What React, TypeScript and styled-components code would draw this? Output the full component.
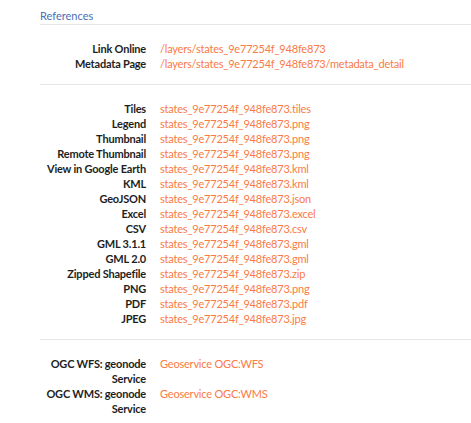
import React from 'react';
import styled, { createGlobalStyle } from 'styled-components';

const GlobalStyle = createGlobalStyle`
  html, body {
    margin: 0;
    padding: 0;
    background: #ffffff;
  }
  body {
    font-family: Lato, "Open Sans", "Liberation Sans", sans-serif;
    -webkit-font-smoothing: antialiased;
  }
`;

interface Entry {
  label: string;
  value: string;
}

const links: Entry[] = [
  { label: 'Link Online', value: '/layers/states_9e77254f_948fe873' },
  { label: 'Metadata Page', value: '/layers/states_9e77254f_948fe873/metadata_detail' },
];

const base = 'states_9e77254f_948fe873';

const downloads: Entry[] = [
  { label: 'Tiles', value: `${base}.tiles` },
  { label: 'Legend', value: `${base}.png` },
  { label: 'Thumbnail', value: `${base}.png` },
  { label: 'Remote Thumbnail', value: `${base}.png` },
  { label: 'View in Google Earth', value: `${base}.kml` },
  { label: 'KML', value: `${base}.kml` },
  { label: 'GeoJSON', value: `${base}.json` },
  { label: 'Excel', value: `${base}.excel` },
  { label: 'CSV', value: `${base}.csv` },
  { label: 'GML 3.1.1', value: `${base}.gml` },
  { label: 'GML 2.0', value: `${base}.gml` },
  { label: 'Zipped Shapefile', value: `${base}.zip` },
  { label: 'PNG', value: `${base}.png` },
  { label: 'PDF', value: `${base}.pdf` },
  { label: 'JPEG', value: `${base}.jpg` },
];

const services: Entry[] = [
  { label: 'OGC WFS: geonode Service', value: 'Geoservice OGC:WFS' },
  { label: 'OGC WMS: geonode Service', value: 'Geoservice OGC:WMS' },
];

const Panel = styled.section`
  padding: 9px 0 0 40px;
`;

const Heading = styled.h4`
  margin: 0;
  padding-bottom: 1px;
  font-size: 11px;
  font-weight: 400;
  line-height: 14px;
  color: #4a6fb5;
  border-bottom: 1px solid #e6e6e6;
`;

const Group = styled.dl<{ $last?: boolean }>`
  display: grid;
  grid-template-columns: 106px 1fr;
  column-gap: 14px;
  margin: 0;
  padding: 16px 0 13px;
  border-bottom: ${(p) => (p.$last ? 'none' : '1px solid #e6e6e6')};
  font-size: 11px;
  line-height: 15px;
  letter-spacing: -0.2px;
`;

const Term = styled.dt`
  text-align: right;
  font-weight: 700;
  color: #1e1e1e;
`;

const Detail = styled.dd`
  margin: 0;
  color: #fb7a45;
  white-space: nowrap;
`;

const Link = styled.a`
  color: inherit;
  text-decoration: none;
`;

const Section: React.FC<{ items: Entry[]; last?: boolean }> = ({ items, last }) => (
  <Group $last={last}>
    {items.map((item, i) => (
      <React.Fragment key={i}>
        <Term>{item.label}</Term>
        <Detail>
          <Link href="#">{item.value}</Link>
        </Detail>
      </React.Fragment>
    ))}
  </Group>
);

export default function App() {
  return (
    <>
      <GlobalStyle />
      <Panel>
        <Heading>References</Heading>
        <Section items={links} />
        <Section items={downloads} />
        <Section items={services} last />
      </Panel>
    </>
  );
}
